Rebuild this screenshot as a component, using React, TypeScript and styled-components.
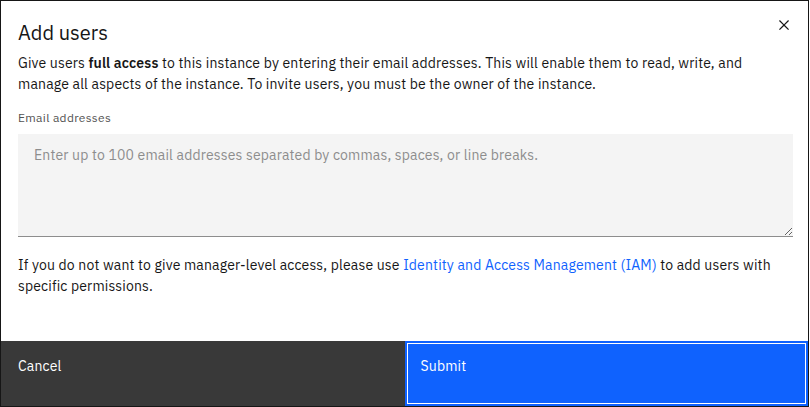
import React from "react";
import styled, { createGlobalStyle } from "styled-components";

const Global = createGlobalStyle`
  html, body { margin: 0; padding: 0; background: #ffffff; }
  * { box-sizing: border-box; }
  body { font-family: "IBM Plex Sans", "Noto Sans", "Open Sans", sans-serif; color: #161616; }
`;

const Frame = styled.div`
  width: 809px;
  height: 407px;
  border: 1px solid #161616;
  background: #ffffff;
  display: flex;
  flex-direction: column;
  position: relative;
`;

const Header = styled.header`
  padding: 18px 48px 0 17px;
`;

const Title = styled.h2`
  margin: 0;
  font-size: 20px;
  line-height: 28px;
  font-weight: 400;
  color: #161616;
`;

const CloseButton = styled.button`
  position: absolute;
  top: 0;
  right: 0;
  width: 48px;
  height: 48px;
  border: none;
  background: transparent;
  display: flex;
  align-items: center;
  justify-content: center;
  padding: 0;
  cursor: pointer;
`;

const Body = styled.div`
  flex: 1;
  padding: 6px 15px 0 17px;
  display: flex;
  flex-direction: column;
`;

const Paragraph = styled.p<{ $gap?: number }>`
  margin: 0;
  margin-top: ${(p) => p.$gap ?? 0}px;
  font-size: 14px;
  line-height: 20.5px;
  letter-spacing: 0.16px;
  color: #161616;
`;

const Strong = styled.strong`
  font-weight: 600;
`;

const Label = styled.label`
  display: block;
  margin-top: 16px;
  margin-bottom: 8px;
  font-size: 12px;
  line-height: 16px;
  letter-spacing: 0.32px;
  color: #525252;
`;

const TextArea = styled.textarea`
  display: block;
  width: 100%;
  height: 103px;
  resize: vertical;
  border: none;
  border-bottom: 1px solid #8d8d8d;
  background: #f4f4f4;
  padding: 11px 16px;
  font-family: inherit;
  font-size: 14px;
  line-height: 20px;
  letter-spacing: 0.16px;
  color: #161616;
  outline: none;
  &::placeholder { color: #8d8d8d; }
`;

const Link = styled.a`
  color: #0f62fe;
  text-decoration: none;
`;

const Footer = styled.footer`
  display: grid;
  grid-template-columns: 1fr 1fr;
  height: 65px;
`;

const ActionButton = styled.button<{ $primary?: boolean }>`
  display: flex;
  align-items: flex-start;
  text-align: left;
  font-family: inherit;
  font-size: 14px;
  line-height: 20px;
  letter-spacing: 0.16px;
  color: #ffffff;
  cursor: pointer;
  background: ${(p) => (p.$primary ? "#0f62fe" : "#393939")};
  border: ${(p) => (p.$primary ? "2px solid #0f62fe" : "none")};
  box-shadow: ${(p) => (p.$primary ? "inset 0 0 0 1px #ffffff" : "none")};
  padding: ${(p) => (p.$primary ? "13px 14px" : "15px 17px")};
`;

export default function App() {
  return (
    <>
      <Global />
      <Frame>
        <Header>
          <Title>Add users</Title>
        </Header>
        <CloseButton aria-label="Close">
          <svg width="20" height="20" viewBox="0 0 32 32" fill="#161616">
            <path d="M24 9.4 22.6 8 16 14.6 9.4 8 8 9.4l6.6 6.6L8 22.6 9.4 24l6.6-6.6 6.6 6.6 1.4-1.4-6.6-6.6L24 9.4z" />
          </svg>
        </CloseButton>
        <Body>
          <Paragraph>
            Give users <Strong>full access</Strong> to this instance by entering their email addresses. This will enable them to read, write, and manage all aspects of the instance. To invite users, you must be the owner of the instance.
          </Paragraph>
          <Label htmlFor="emails">Email addresses</Label>
          <TextArea
            id="emails"
            placeholder="Enter up to 100 email addresses separated by commas, spaces, or line breaks."
          />
          <Paragraph $gap={18}>
            If you do not want to give manager-level access, please use{" "}
            <Link href="#">Identity and Access Management (IAM)</Link> to add users with specific permissions.
          </Paragraph>
        </Body>
        <Footer>
          <ActionButton>Cancel</ActionButton>
          <ActionButton $primary>Submit</ActionButton>
        </Footer>
      </Frame>
    </>
  );
}
